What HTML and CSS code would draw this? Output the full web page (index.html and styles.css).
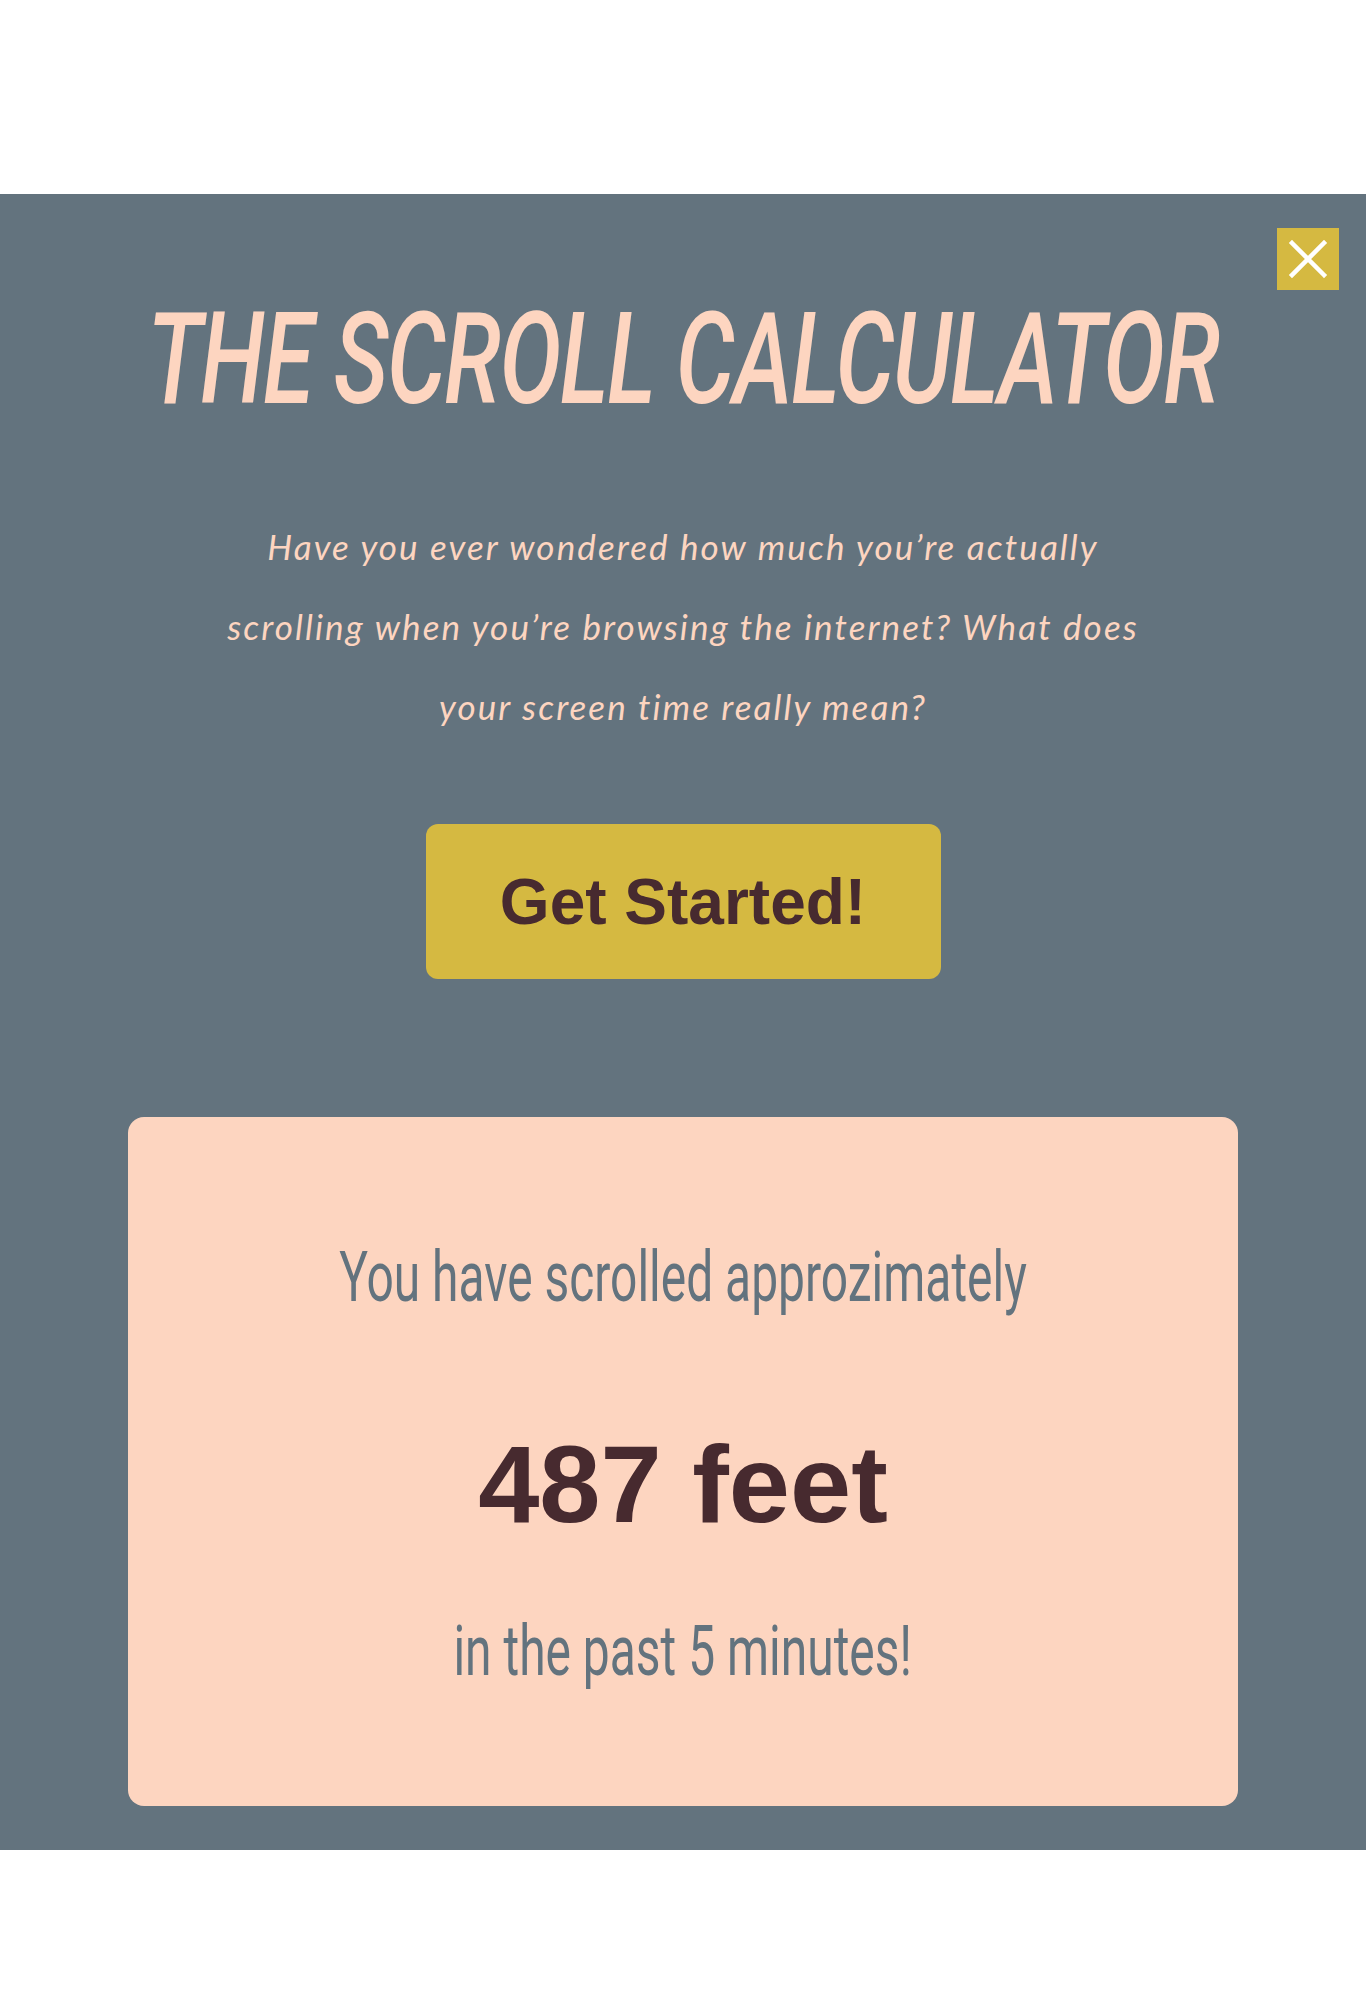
FILE: index.html
```html
<!DOCTYPE html>
<html lang="en">
<head>
<meta charset="utf-8">
<title>The Scroll Calculator</title>
<link rel="stylesheet" href="styles.css">
</head>
<body>
<header class="top-space"></header>
<section class="panel">
  <button class="close" aria-label="Close">
    <svg viewBox="0 0 62 62" width="62" height="62"><path d="M15 15 L47 47 M47 15 L15 47" stroke="#fff" stroke-width="4.5" stroke-linecap="square"/></svg>
  </button>
  <h1 class="title"><span class="title-inner">THE SCROLL CALCULATOR</span></h1>
  <p class="intro">Have you ever wondered how much you’re actually scrolling when you’re browsing the internet? What does your screen time really mean?</p>
  <button class="start">Get Started!</button>
  <div class="card">
    <p class="card-line"><span class="cond">You have scrolled approzimately</span></p>
    <p class="amount">487 feet</p>
    <p class="card-line last"><span class="cond">in the past 5 minutes!</span></p>
  </div>
</section>
<div class="bottom-space"></div>
</body>
</html>
```
FILE: styles.css
```css
* { box-sizing: border-box; }
html, body { margin: 0; padding: 0; background: #ffffff; }
body { font-family: "Liberation Sans", Arial, sans-serif; overflow-x: hidden; }

.top-space { height: 194px; }
.bottom-space { height: 151px; }

.panel {
  position: relative;
  background: #63737e;
  padding: 0 128px 44px;
  display: flex;
  flex-direction: column;
  align-items: center;
}

.close {
  position: absolute;
  top: 34px;
  right: 27px;
  width: 62px;
  height: 62px;
  padding: 0;
  border: 0;
  background: #d5b941;
  display: flex;
  cursor: pointer;
}
.close svg { display: block; }

.title {
  margin: 110px 0 0;
  height: 110px;
  width: 100%;
  display: flex;
  justify-content: center;
  font-family: "Roboto", sans-serif;
  font-weight: 500;
  font-style: italic;
  font-size: 128px;
  line-height: 110px;
  color: #fdd5c0;
  letter-spacing: -2px;
  white-space: nowrap;
}
.title-inner {
  display: inline-block;
  flex: none;
  transform: scaleX(0.725);
  transform-origin: center;
}

.intro {
  margin: 92px 0 0;
  width: 940px;
  text-align: center;
  font-family: "Lato", sans-serif;
  font-style: italic;
  font-weight: 400;
  font-size: 35px;
  line-height: 80px;
  letter-spacing: 2.1px;
  color: #fdd5c0;
}

.start {
  margin-top: 78px;
  width: 515px;
  height: 155px;
  border: 0;
  border-radius: 12px;
  background: #d5b941;
  color: #472a2f;
  font-family: "Liberation Sans", Arial, sans-serif;
  font-weight: 700;
  font-size: 64px;
  cursor: pointer;
}

.card {
  margin-top: 138px;
  width: 100%;
  height: 689px;
  background: #fdd5c0;
  border-radius: 16px;
  display: flex;
  flex-direction: column;
  align-items: center;
  padding-top: 120px;
}

.card-line {
  margin: 0;
  font-family: "Roboto", sans-serif;
  font-weight: 400;
  font-size: 70px;
  line-height: 80px;
  color: #63737e;
  white-space: nowrap;
}
.cond {
  display: inline-block;
  transform: scaleX(0.685);
}
.amount {
  margin: 112px 0 0;
  font-family: "Liberation Sans", Arial, sans-serif;
  font-weight: 700;
  font-size: 110px;
  line-height: 110px;
  color: #472a2f;
}
.card-line.last { margin-top: 72px; }
```
